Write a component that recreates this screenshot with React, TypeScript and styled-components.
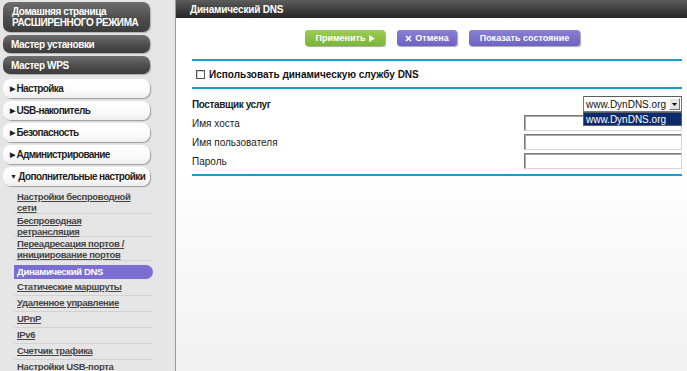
import React from 'react';
import styled, { createGlobalStyle } from 'styled-components';

const GlobalStyle = createGlobalStyle`
  html, body {
    margin: 0;
    padding: 0;
    width: 687px;
    height: 371px;
    overflow: hidden;
    font-family: 'Liberation Sans', Arial, sans-serif;
    background: #ffffff;
  }
`;

const Page = styled.div`
  display: grid;
  grid-template-columns: 175px 1px 1fr;
  height: 371px;
`;

const Sidebar = styled.nav`
  background: #e5e5e5;
  padding: 2px 0 0 3px;
  display: flex;
  flex-direction: column;
  overflow: hidden;
`;

const Divider = styled.div`
  background: #9a9a9a;
`;

const DarkButton = styled.div<{ $tall?: boolean }>`
  flex: none;
  width: 147px;
  height: ${(p) => (p.$tall ? 30 : 18)}px;
  margin-bottom: 3px;
  box-sizing: border-box;
  padding: ${(p) => (p.$tall ? '4px 0 0 9px' : '0 0 0 8px')};
  display: flex;
  align-items: ${(p) => (p.$tall ? 'flex-start' : 'center')};
  border-radius: 7px;
  background: linear-gradient(180deg, #6e6e6e 0%, #4d4d4d 55%, #3c3c3c 100%);
  box-shadow: 1px 1px 1px #b0b0b0;
  color: #ffffff;
  font-weight: 700;
  font-size: 10px;
  line-height: 11px;
  letter-spacing: -0.4px;
  white-space: nowrap;
`;

const LightButton = styled.div`
  flex: none;
  width: 147px;
  height: 19px;
  margin-top: 2px;
  margin-bottom: 1px;
  box-sizing: border-box;
  padding-left: 7px;
  display: flex;
  align-items: center;
  gap: 2px;
  border-radius: 8px;
  background: linear-gradient(180deg, #ffffff 0%, #fbfbfb 60%, #eeeeee 100%);
  box-shadow: 1px 1px 1px #9c9c9c;
  color: #1e1e1e;
  font-weight: 700;
  font-size: 10px;
  letter-spacing: -0.6px;
  white-space: nowrap;
`;

const Caret = styled.span`
  font-size: 7px;
  line-height: 1;
`;

const SubMenu = styled.ul`
  flex: none;
  list-style: none;
  margin: 3px 0 0 11px;
  padding: 0;
  width: 139px;
`;

const SubItem = styled.li<{ $double?: boolean; $active?: boolean }>`
  box-sizing: border-box;
  height: ${(p) => (p.$double ? 23.5 : 16)}px;
  padding: 1px 0 0 3px;
  border-bottom: 1px solid #d2d2d2;
  font-size: 9.5px;
  line-height: 11px;
  letter-spacing: -0.35px;
  font-weight: 700;
  white-space: nowrap;
  color: ${(p) => (p.$active ? '#ffffff' : '#454545')};
  text-decoration: ${(p) => (p.$active ? 'none' : 'underline')};
  background: ${(p) => (p.$active ? '#7a6fd0' : 'transparent')};
  border-radius: ${(p) => (p.$active ? '0 8px 8px 0' : '0')};
  ${(p) => (p.$active ? 'height: 14px; margin: 4px 0 1px; border-bottom: none; padding-top: 1px;' : '')}
`;

const Main = styled.main`
  display: flex;
  flex-direction: column;
  background: linear-gradient(180deg, #ffffff 0%, #ffffff 45%, #f1f1f1 100%);
`;

const TitleBar = styled.header`
  height: 18px;
  padding-left: 14px;
  display: flex;
  align-items: center;
  background: linear-gradient(180deg, #5d5d5d 0%, #3a3a3a 60%, #262626 100%);
  color: #ffffff;
  font-weight: 700;
  font-size: 10px;
  letter-spacing: -0.2px;
`;

const Body = styled.div`
  padding: 0 5px 0 16px;
  display: flex;
  flex-direction: column;
`;

const ButtonRow = styled.div`
  display: flex;
  gap: 12px;
  margin: 12px 0 0 113px;
`;

const ActionButton = styled.button<{ $tone: 'green' | 'purple'; $w: number }>`
  width: ${(p) => p.$w}px;
  height: 16px;
  padding: 0;
  border: none;
  border-radius: 3px;
  font-family: inherit;
  font-weight: 700;
  font-size: 9px;
  color: #ffffff;
  display: flex;
  align-items: center;
  justify-content: center;
  gap: 3px;
  background: ${(p) =>
    p.$tone === 'green'
      ? 'linear-gradient(180deg, #9ccd52 0%, #7ab43a 100%)'
      : 'linear-gradient(180deg, #8a80d6 0%, #6d63c2 100%)'};
  box-shadow: 1px 1px 1px #a8a8a8;
`;

const Rule = styled.hr<{ $top?: number }>`
  border: none;
  height: 2px;
  background: #1b9bd3;
  margin: ${(p) => p.$top ?? 0}px 0 0;
`;

const CheckRow = styled.label`
  height: 26px;
  display: flex;
  align-items: center;
  gap: 4px;
  padding-left: 4px;
  font-weight: 700;
  font-size: 10px;
  color: #111111;
`;

const Check = styled.span`
  width: 7px;
  height: 7px;
  border: 1px solid #555555;
  background: #ffffff;
  box-shadow: inset 1px 1px 0 #cfcfcf;
`;

const Form = styled.div`
  display: grid;
  grid-template-columns: 1fr auto;
  grid-auto-rows: 16px;
  row-gap: 3px;
  margin: 7px 0 5px;
  align-items: center;
`;

const Label = styled.span<{ $strong?: boolean }>`
  font-size: 10px;
  font-weight: ${(p) => (p.$strong ? 700 : 400)};
  color: #222222;
  letter-spacing: ${(p) => (p.$strong ? '-0.4px' : '0')};
`;

const SelectWrap = styled.div`
  position: relative;
  justify-self: end;
  width: 99px;
  height: 16px;
`;

const SelectBox = styled.div`
  box-sizing: border-box;
  width: 100%;
  height: 100%;
  border: 1px solid #7a7a7a;
  border-top-color: #5a5a5a;
  background: #ffffff;
  display: flex;
  align-items: center;
  justify-content: space-between;
  padding: 0 1px 0 2px;
  font-size: 10px;
  color: #111111;
`;

const SelectArrow = styled.span`
  width: 11px;
  height: 12px;
  box-sizing: border-box;
  background: #e4e4e4;
  border: 1px solid;
  border-color: #ffffff #6f6f6f #6f6f6f #ffffff;
  display: flex;
  align-items: center;
  justify-content: center;
`;

const DropList = styled.div`
  position: absolute;
  left: 0;
  top: 16px;
  width: 99px;
  height: 14px;
  box-sizing: border-box;
  background: #0c2a6c;
  border: 1px solid #5e5e5e;
  color: #ffffff;
  font-size: 10px;
  padding-left: 2px;
  display: flex;
  align-items: center;
  z-index: 2;
`;

const TextInput = styled.input`
  justify-self: end;
  width: 158px;
  height: 16px;
  box-sizing: border-box;
  margin: 0;
  padding: 0 2px;
  border: 1px solid;
  border-color: #7a7a7a #d6d6d6 #d6d6d6 #7a7a7a;
  box-shadow: inset 1px 1px 0 #a8a8a8;
  background: #ffffff;
  font-family: inherit;
  font-size: 10px;
`;

const submenu: { lines: string[]; active?: boolean }[] = [
  { lines: ['Настройки беспроводной', 'сети'] },
  { lines: ['Беспроводная', 'ретрансляция'] },
  { lines: ['Переадресация портов /', 'инициирование портов'] },
  { lines: ['Динамический DNS'], active: true },
  { lines: ['Статические маршруты'] },
  { lines: ['Удаленное управление'] },
  { lines: ['UPnP'] },
  { lines: ['IPv6'] },
  { lines: ['Счетчик трафика'] },
  { lines: ['Настройки USB-порта'] }
];

const sections = [
  { label: 'Настройка', open: false },
  { label: 'USB-накопитель', open: false },
  { label: 'Безопасность', open: false },
  { label: 'Администрирование', open: false },
  { label: 'Дополнительные настройки', open: true }
];

export default function App() {
  return (
    <>
      <GlobalStyle />
      <Page>
        <Sidebar>
          <DarkButton $tall>
            Домашняя страница
            <br />
            РАСШИРЕННОГО РЕЖИМА
          </DarkButton>
          <DarkButton>Мастер установки</DarkButton>
          <DarkButton>Мастер WPS</DarkButton>
          {sections.map((s) => (
            <LightButton key={s.label}>
              <Caret>{s.open ? '▼' : '▶'}</Caret>
              {s.label}
            </LightButton>
          ))}
          <SubMenu>
            {submenu.map((item) => (
              <SubItem
                key={item.lines[0]}
                $double={item.lines.length > 1}
                $active={item.active}
              >
                {item.lines.map((line, i) => (
                  <React.Fragment key={line}>
                    {i > 0 && <br />}
                    {line}
                  </React.Fragment>
                ))}
              </SubItem>
            ))}
          </SubMenu>
        </Sidebar>
        <Divider />
        <Main>
          <TitleBar>Динамический DNS</TitleBar>
          <Body>
            <ButtonRow>
              <ActionButton $tone="green" $w={80}>
                Применить
                <svg width="6" height="7" viewBox="0 0 6 7">
                  <path d="M0 0 L6 3.5 L0 7 Z" fill="#ffffff" />
                </svg>
              </ActionButton>
              <ActionButton $tone="purple" $w={60}>
                <svg width="7" height="7" viewBox="0 0 7 7">
                  <path d="M1 1 L6 6 M6 1 L1 6" stroke="#ffffff" strokeWidth="1.6" />
                </svg>
                Отмена
              </ActionButton>
              <ActionButton $tone="purple" $w={111}>
                Показать состояние
              </ActionButton>
            </ButtonRow>
            <Rule $top={13} />
            <CheckRow>
              <Check />
              Использовать динамическую службу DNS
            </CheckRow>
            <Rule />
            <Form>
              <Label $strong>Поставщик услуг</Label>
              <SelectWrap>
                <SelectBox>
                  www.DynDNS.org
                  <SelectArrow>
                    <svg width="5" height="3" viewBox="0 0 5 3">
                      <path d="M0 0 L5 0 L2.5 3 Z" fill="#000000" />
                    </svg>
                  </SelectArrow>
                </SelectBox>
                <DropList>www.DynDNS.org</DropList>
              </SelectWrap>
              <Label>Имя хоста</Label>
              <TextInput />
              <Label>Имя пользователя</Label>
              <TextInput />
              <Label>Пароль</Label>
              <TextInput type="password" />
            </Form>
            <Rule />
          </Body>
        </Main>
      </Page>
    </>
  );
}
